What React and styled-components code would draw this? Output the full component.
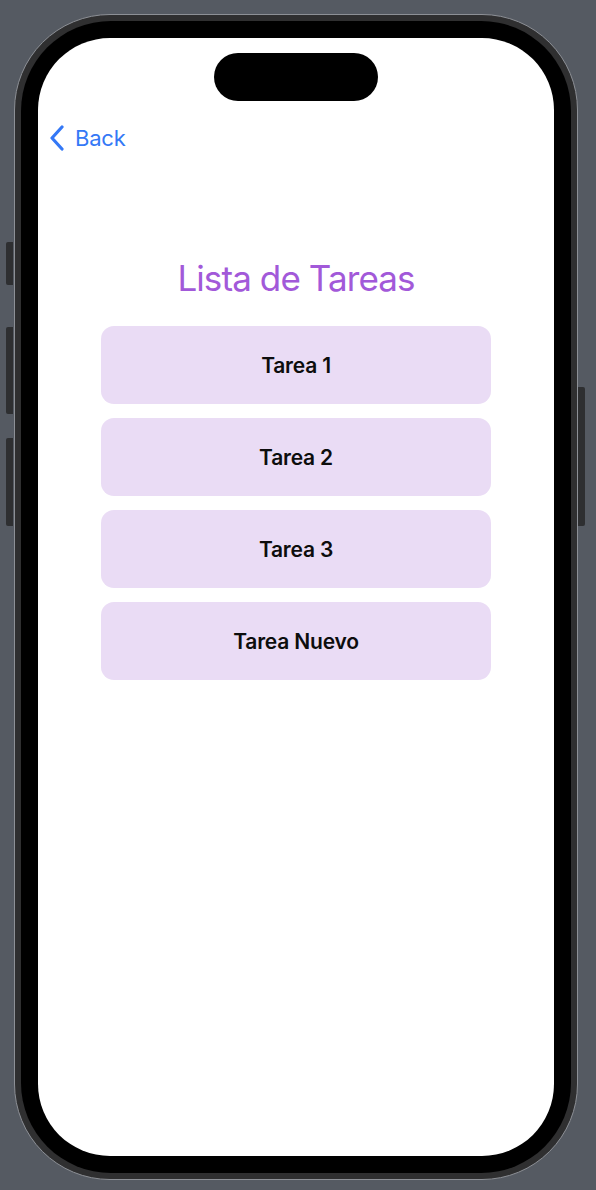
import React from 'react';
import styled, { createGlobalStyle } from 'styled-components';

const GlobalStyle = createGlobalStyle`
    html, body {
        margin: 0;
        padding: 0;
        background: #555a62;
    }
    body {
        font-family: Inter, "Noto Sans", "Liberation Sans", sans-serif;
        -webkit-font-smoothing: antialiased;
    }
`

const Stage = styled.div`
    display: flex;
    align-items: flex-start;
    justify-content: flex-start;
    width: 596px;
    height: 1190px;
    padding: 14px 0 0 14px;
    box-sizing: border-box;
    overflow: hidden;
`
const Phone = styled.div`
    position: relative;
    width: 564px;
    height: 1166px;
    box-sizing: border-box;
    padding: 6px;
    border: 1px solid #8d9096;
    border-radius: 96px;
    background: #2f2f30;
`
const Bezel = styled.div`
    width: 100%;
    height: 100%;
    box-sizing: border-box;
    padding: 17px;
    border-radius: 90px;
    background: #000;
`
const SideButton = styled.div`
    position: absolute;
    width: 7px;
    height: ${p => p.$h}px;
    top: ${p => p.$top}px;
    ${p => p.$right ? 'right: -8px;' : 'left: -9px;'}
    background: #2e2f31;
    border-radius: ${p => p.$right ? '0 2px 2px 0' : '2px 0 0 2px'};
`
const Screen = styled.div`
    position: relative;
    display: flex;
    flex-direction: column;
    align-items: center;
    width: 100%;
    height: 100%;
    border-radius: 72px;
    background: #fff;
    overflow: hidden;
`
const Island = styled.div`
    position: absolute;
    top: 15px;
    left: 176px;
    width: 164px;
    height: 48px;
    border-radius: 24px;
    background: #000;
`
const NavBar = styled.div`
    display: flex;
    align-items: center;
    align-self: stretch;
    height: 44px;
    margin-top: 78px;
    padding-left: 11px;
`
const BackButton = styled.button`
    display: flex;
    align-items: center;
    gap: 10px;
    padding: 0;
    border: none;
    background: none;
    color: #3478f6;
    font-family: Inter, "Noto Sans", sans-serif;
    font-size: 22px;
    letter-spacing: -0.2px;
    cursor: pointer;
`
const Title = styled.h1`
    margin: 95px 0 25px;
    font-size: 35px;
    line-height: 46px;
    font-weight: 400;
    letter-spacing: -0.9px;
    color: #a259d9;
`
const List = styled.div`
    display: flex;
    flex-direction: column;
    gap: 14px;
    width: 390px;
`
const TaskCard = styled.div`
    display: flex;
    align-items: center;
    justify-content: center;
    height: 78px;
    border-radius: 13px;
    background: #eadcf5;
    color: #0d0d0d;
    font-size: 21px;
    font-weight: 600;
    letter-spacing: -0.2px;
`

const tasks = ['Tarea 1', 'Tarea 2', 'Tarea 3', 'Tarea Nuevo'];

const App = () => {
    return (
        <Stage>
            <GlobalStyle />
            <Phone>
                <SideButton $top={227} $h={43} />
                <SideButton $top={312} $h={87} />
                <SideButton $top={423} $h={88} />
                <SideButton $right $top={372} $h={139} />
                <Bezel>
                    <Screen>
                        <Island />
                        <NavBar>
                            <BackButton>
                                <svg width="16" height="26" viewBox="0 0 16 26" fill="none">
                                    <path d="M13 2 L3 13 L13 24" stroke="#3478f6" strokeWidth="3.2" strokeLinecap="round" strokeLinejoin="round" />
                                </svg>
                                Back
                            </BackButton>
                        </NavBar>
                        <Title>Lista de Tareas</Title>
                        <List>
                            {tasks.map(t => <TaskCard key={t}>{t}</TaskCard>)}
                        </List>
                    </Screen>
                </Bezel>
            </Phone>
        </Stage>
    )
}

export default App;
